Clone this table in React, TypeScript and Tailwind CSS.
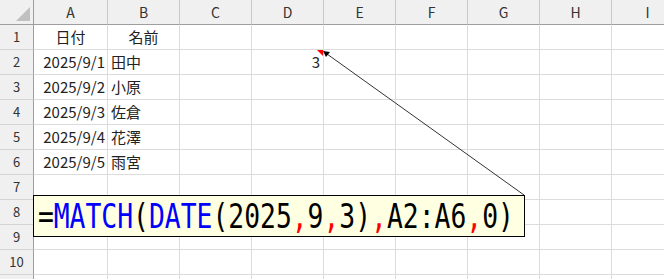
const cols = ["A", "B", "C", "D", "E", "F", "G", "H", "I"];
const widths = ["w-[74px]", "w-[72px]", "w-[72px]", "w-[72px]", "w-[72px]", "w-[72px]", "w-[72px]", "w-[72px]", "w-[72px]"];

const rows: Record<number, [string, string, string]> = {
  1: ["日付", "名前", ""],
  2: ["2025/9/1", "田中", "3"],
  3: ["2025/9/2", "小原", ""],
  4: ["2025/9/3", "佐倉", ""],
  5: ["2025/9/4", "花澤", ""],
  6: ["2025/9/5", "雨宮", ""],
};

function Cell({ r, c }: { r: number; c: number }) {
  const data = rows[r];
  let text = "";
  let align = "justify-start pl-[3px]";
  if (data) {
    if (c === 0) {
      text = data[0];
      align = r === 1 ? "justify-center" : "justify-end pr-[2px]";
    } else if (c === 1) {
      text = data[1];
      align = r === 1 ? "justify-center" : "justify-start pl-[3px]";
    } else if (c === 3) {
      text = data[2];
      align = "justify-end pr-[3px]";
    }
  }
  return (
    <div
      className={`${widths[c]} h-[25px] shrink-0 border-r border-b border-[#dcdcdc] flex items-center ${align} text-[15px] text-[#222] relative`}
    >
      {text}
      {r === 2 && c === 3 && (
        <div className="absolute right-0 top-0 w-0 h-0 border-t-[6px] border-t-[#ff0000] border-l-[6px] border-l-transparent" />
      )}
    </div>
  );
}

export default function App() {
  return (
    <div
      className="relative w-[664px] h-[279px] overflow-hidden bg-white"
      style={{ fontFamily: '"Noto Sans CJK JP", "Noto Sans", sans-serif' }}
    >
      {/* column headers */}
      <div className="flex">
        <div className="w-[34px] h-[25px] shrink-0 bg-[#f0f0f0] border-r border-b border-[#9e9e9e] relative">
          <div className="absolute right-[3px] bottom-[3px] w-0 h-0 border-b-[14px] border-b-[#c0c0c0] border-l-[14px] border-l-transparent" />
        </div>
        {cols.map((c, i) => (
          <div
            key={c}
            className={`${widths[i]} h-[25px] shrink-0 bg-[#f0f0f0] border-r border-r-[#c8c8c8] border-b border-b-[#9e9e9e] flex items-center justify-center text-[14px] text-[#333]`}
          >
            {c}
          </div>
        ))}
      </div>

      {/* rows */}
      {Array.from({ length: 11 }, (_, k) => k + 1).map((r) => (
        <div key={r} className="flex">
          <div className="w-[34px] h-[25px] shrink-0 bg-[#f0f0f0] border-r border-r-[#9e9e9e] border-b border-b-[#d4d4d4] flex items-center justify-center text-[13px] text-[#333]">
            {r < 11 ? r : ""}
          </div>
          {cols.map((c, i) => (
            <Cell key={c} r={r} c={i} />
          ))}
        </div>
      ))}

      {/* arrow to D2 */}
      <svg className="absolute left-0 top-0" width="664" height="279">
        <line x1="524" y1="195" x2="327" y2="54" stroke="#333" strokeWidth="1" />
        <polygon points="323,51 330,52 326,57" fill="#000" />
      </svg>

      {/* formula comment box */}
      <div className="absolute left-[33px] top-[195px] w-[492px] h-[42px] bg-[#ffffe1] border border-black overflow-hidden">
        <span
          className="inline-block origin-left [transform:scaleX(0.775)] whitespace-pre text-[34px] leading-[40px] pl-[5px] text-black"
          style={{ fontFamily: '"DejaVu Sans Mono", monospace' }}
        >
          =<span className="text-[#0000ff]">MATCH</span>(<span className="text-[#0000ff]">DATE</span>(2025<span className="text-[#ff0000]">,</span>9<span className="text-[#ff0000]">,</span>3)<span className="text-[#ff0000]">,</span>A2:A6<span className="text-[#ff0000]">,</span>0)
        </span>
      </div>
    </div>
  );
}
